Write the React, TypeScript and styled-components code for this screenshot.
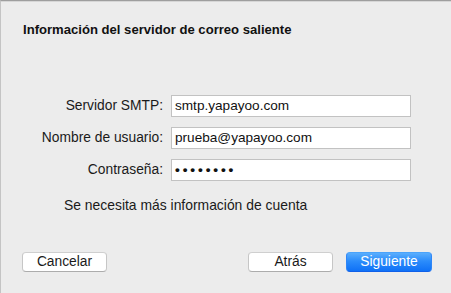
import styled, { createGlobalStyle } from "styled-components";

const GlobalStyle = createGlobalStyle`
    html, body {
        margin: 0;
        padding: 0;
        background: #ececec;
    }
    body {
        font-family: "Liberation Sans", Arial, sans-serif;
        color: #1a1a1a;
    }
`;

const Window = styled.div`
    width: 451px;
    height: 293px;
    box-sizing: border-box;
    background: #ececec;
    border-top: 1px solid #9e9e9e;
    border-left: 1px solid #c4c4c4;
    display: flex;
    flex-direction: column;

    &::before {
        content: "";
        display: block;
        height: 1px;
        background: #d6d6d6;
    }
`;

const Title = styled.h1`
    margin: 20px 0 0 22px;
    font-size: 13.1px;
    line-height: 16px;
    font-weight: bold;
    color: #111;
`;

const Form = styled.div`
    display: grid;
    grid-template-columns: 162px 240px;
    column-gap: 8px;
    row-gap: 10px;
    margin-top: 57px;
    align-items: center;
`;

const Label = styled.label`
    justify-self: end;
    font-size: 13.8px;
    line-height: 16px;
    color: #1a1a1a;
`;

const Field = styled.div<{ $secret?: boolean }>`
    box-sizing: border-box;
    height: 22px;
    background: #fff;
    border: 1px solid #c2c2c2;
    padding: 0 3px;
    font-size: 13.6px;
    line-height: 20px;
    color: #111;
    letter-spacing: ${(p) => (p.$secret ? "2.9px" : "normal")};
    font-weight: ${(p) => (p.$secret ? "bold" : "normal")};
`;

const Note = styled.p`
    margin: 16px 0 0 63px;
    font-size: 13.9px;
    line-height: 16px;
    color: #1a1a1a;
`;

const Footer = styled.div`
    margin-top: auto;
    margin-bottom: 21px;
    display: flex;
    align-items: center;
    padding: 0 19px 0 21px;
`;

const Spacer = styled.div`
    flex: 1;
`;

const Button = styled.button<{ $primary?: boolean }>`
    box-sizing: border-box;
    width: ${(p) => (p.$primary ? "86px" : "85px")};
    height: 20px;
    margin-left: ${(p) => (p.$primary ? "13px" : "0")};
    border-radius: 4px;
    font-family: "Liberation Sans", Arial, sans-serif;
    font-size: 13.8px;
    line-height: 18px;
    padding: 0;
    border: 1px solid ${(p) => (p.$primary ? "#2f86f7" : "#c6c6c6")};
    border-top-color: ${(p) => (p.$primary ? "#4aa3fb" : "#cfcfcf")};
    border-bottom-color: ${(p) => (p.$primary ? "#1060e8" : "#acacac")};
    color: ${(p) => (p.$primary ? "#fff" : "#1a1a1a")};
    background: ${(p) =>
        p.$primary
            ? "linear-gradient(to bottom, #5aaefd 0%, #2b8cfb 45%, #0f71f6 100%)"
            : "#fff"};
`;

export default function App() {
    return (
        <>
            <GlobalStyle />
            <Window>
                <Title>Información del servidor de correo saliente</Title>
                <Form>
                    <Label>Servidor SMTP:</Label>
                    <Field>smtp.yapayoo.com</Field>
                    <Label>Nombre de usuario:</Label>
                    <Field>prueba@yapayoo.com</Field>
                    <Label>Contraseña:</Label>
                    <Field $secret>••••••••</Field>
                </Form>
                <Note>Se necesita más información de cuenta</Note>
                <Footer>
                    <Button>Cancelar</Button>
                    <Spacer />
                    <Button>Atrás</Button>
                    <Button $primary>Siguiente</Button>
                </Footer>
            </Window>
        </>
    );
}
